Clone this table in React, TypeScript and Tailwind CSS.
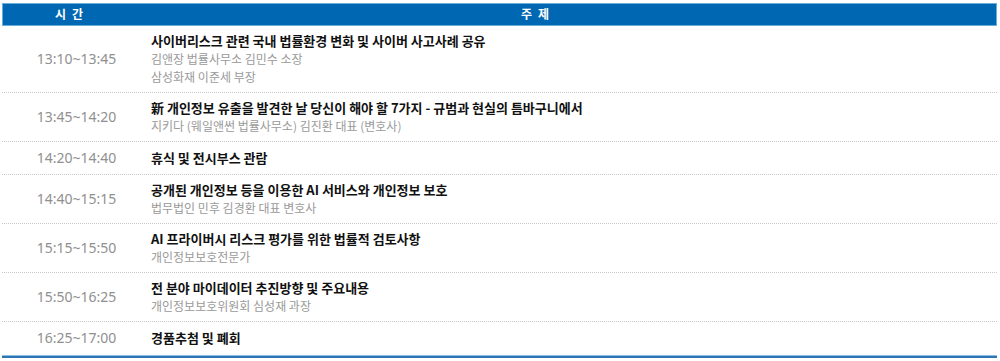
const ROWS: { time: string; title: string; subs: string[] }[] = [
  {
    time: '13:10~13:45',
    title: '사이버리스크 관련 국내 법률환경 변화 및 사이버 사고사례 공유',
    subs: ['김앤장 법률사무소 김민수 소장', '삼성화재 이준세 부장'],
  },
  {
    time: '13:45~14:20',
    title: '新 개인정보 유출을 발견한 날 당신이 해야 할 7가지 - 규범과 현실의 틈바구니에서',
    subs: ['지키다 (웨일앤썬 법률사무소) 김진환 대표 (변호사)'],
  },
  { time: '14:20~14:40', title: '휴식 및 전시부스 관람', subs: [] },
  {
    time: '14:40~15:15',
    title: '공개된 개인정보 등을 이용한 AI 서비스와 개인정보 보호',
    subs: ['법무법인 민후 김경환 대표 변호사'],
  },
  {
    time: '15:15~15:50',
    title: 'AI 프라이버시 리스크 평가를 위한 법률적 검토사항',
    subs: ['개인정보보호전문가'],
  },
  {
    time: '15:50~16:25',
    title: '전 분야 마이데이터 추진방향 및 주요내용',
    subs: ['개인정보보호위원회 심성재 과장'],
  },
  { time: '16:25~17:00', title: '경품추첨 및 폐회', subs: [] },
]

export default function App() {
  return (
    <div
      className="w-[1000px] h-[361px] bg-white pt-[3px] pl-[2px] pr-[3px]"
      style={{ fontFamily: '"Noto Sans", "Noto Sans CJK KR", sans-serif' }}
    >
      {/* header */}
      <div className="flex h-[23px] items-center bg-[#0068b3] border border-[#6aaedc] text-white text-[12px] font-bold">
        <div className="w-[132px] text-center tracking-[6px] pl-[6px]">시간</div>
        <div className="w-[800px] text-center tracking-[6px] pl-[6px]">주제</div>
      </div>

      {/* rows */}
      <div className="flex flex-col">
        {ROWS.map((r, i) => (
          <div
            key={r.time}
            className={
              'flex items-center pt-[6px] ' +
              (i < ROWS.length - 1 ? 'pb-[6px] border-b border-dotted border-[#c8c8c8]' : 'pb-[7px]')
            }
          >
            <div className="w-[149px] text-center text-[14px] leading-[20px] text-[#909090]">{r.time}</div>
            <div className="flex flex-col leading-[18px]" style={{ fontFamily: '"Noto Sans CJK KR", sans-serif' }}>
              <div className="text-[13px] font-bold text-[#111]">{r.title}</div>
              {r.subs.map((s) => (
                <div key={s} className="text-[12px] text-[#9a9a9a]">{s}</div>
              ))}
            </div>
          </div>
        ))}
      </div>
      <div className="h-[3px] bg-[#2c74b3] border-t border-[#8fbde0]" />
    </div>
  )
}
